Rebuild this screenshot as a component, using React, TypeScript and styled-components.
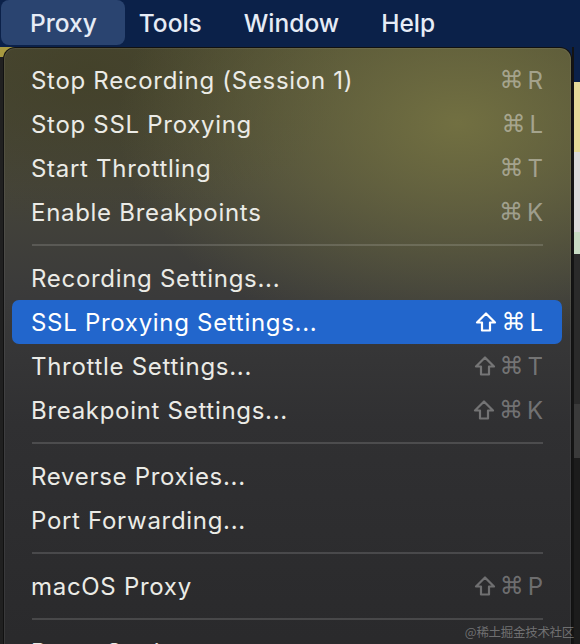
import React from "react";
import styled, { createGlobalStyle } from "styled-components";

const GlobalStyle = createGlobalStyle`
  html, body { margin: 0; padding: 0; background: #1c1c1e; overflow: hidden; }
  body { font-family: Inter, "Noto Sans", "DejaVu Sans", sans-serif; }
`;

const Screen = styled.div`
  position: relative;
  width: 580px;
  height: 644px;
  display: flex;
  flex-direction: column;
  overflow: hidden;
`;

const MenuBar = styled.div`
  height: 47px;
  flex: none;
  background: #0b2149;
  display: flex;
  align-items: flex-start;
  padding-left: 1px;
`;

const MenuTitle = styled.div<{ $active?: boolean; $pl?: number }>`
  height: 45px;
  display: flex;
  align-items: center;
  padding: 0 ${(p) => (p.$active ? "28px" : "14px")} 0 ${(p) => (p.$pl ?? (p.$active ? 29 : 14))}px;
  font-size: 24.5px;
  font-weight: 500;
  color: #e6ecf6;
  border-radius: 8px;
  background: ${(p) => (p.$active ? "#2a4470" : "transparent")};
`;

const Body = styled.div`
  flex: 1;
  display: flex;
  background:
    linear-gradient(90deg, #a89a40 0, #a89a40 18px, #0b2149 18px) top / 100% 14px no-repeat,
    #1e1e20;
`;

const LeftEdge = styled.div`
  width: 3px;
  flex: none;
  background: #202020;
  margin-top: 10px;
`;

const Panel = styled.div`
  width: 569px;
  flex: none;
  box-sizing: border-box;
  border-radius: 12px 12px 0 0;
  border: 1px solid #111;
  border-bottom: none;
  box-shadow: inset 0 0 0 1px rgba(255, 255, 255, 0.07);
  padding: 10px 9px 0 8px;
  display: flex;
  flex-direction: column;
  background:
    radial-gradient(ellipse 60% 36% at 80% 12%, rgba(116, 114, 66, 0.95), rgba(116, 114, 66, 0)),
    radial-gradient(ellipse 45% 25% at 15% 4%, rgba(66, 64, 40, 0.8), rgba(66, 64, 40, 0)),
    linear-gradient(180deg, #4a4933 0%, #45443a 22%, #3a3a3a 40%, #303032 60%, #29292b 100%);
`;

const RightEdge = styled.div`
  flex: 1;
  display: flex;
  flex-direction: column;
  border-left: 2px solid #141414;
`;

const Strip = styled.div<{ $c: string; $h?: number }>`
  background: ${(p) => p.$c};
  height: ${(p) => (p.$h ? `${p.$h}px` : "auto")};
  flex: ${(p) => (p.$h ? "none" : "1")};
`;

const Item = styled.div<{ $active?: boolean }>`
  height: 44px;
  flex: none;
  display: flex;
  align-items: center;
  justify-content: space-between;
  padding: 0 19px;
  border-radius: 7px;
  background: ${(p) => (p.$active ? "#2266cc" : "transparent")};
  color: ${(p) => (p.$active ? "#ffffff" : "#ebebe6")};
  font-size: 24px;
  letter-spacing: 0.7px;
`;

const Shortcut = styled.span<{ $active?: boolean; $dim?: boolean }>`
  display: flex;
  align-items: center;
  gap: 4px;
  color: ${(p) =>
    p.$active ? "#ffffff" : p.$dim ? "rgba(255,255,255,0.32)" : "rgba(255,255,255,0.42)"};
  font-size: 24px;
  letter-spacing: 0;
`;

const Cmd = styled.span`
  font-family: "DejaVu Sans", sans-serif;
  font-size: 24px;
  line-height: 1;
`;

const ShiftIcon = styled.svg`
  width: 22px;
  height: 22px;
  flex: none;
`;

const Separator = styled.div`
  height: 22px;
  flex: none;
  display: flex;
  align-items: center;
  padding: 0 19px 0 20px;
  &::after {
    content: "";
    flex: 1;
    height: 2px;
    background: rgba(255, 255, 255, 0.14);
  }
`;

const Watermark = styled.div`
  position: absolute;
  right: 6px;
  bottom: 3px;
  font-family: "Noto Sans CJK SC", "DejaVu Sans", sans-serif;
  font-size: 12.5px;
  color: rgba(200, 200, 200, 0.45);
  letter-spacing: -0.3px;
`;

type Entry =
  | { sep: true }
  | { label: string; keys?: string; shift?: boolean; active?: boolean };

const entries: Entry[] = [
  { label: "Stop Recording (Session 1)", keys: "R" },
  { label: "Stop SSL Proxying", keys: "L" },
  { label: "Start Throttling", keys: "T" },
  { label: "Enable Breakpoints", keys: "K" },
  { sep: true },
  { label: "Recording Settings..." },
  { label: "SSL Proxying Settings...", keys: "L", shift: true, active: true },
  { label: "Throttle Settings...", keys: "T", shift: true },
  { label: "Breakpoint Settings...", keys: "K", shift: true },
  { sep: true },
  { label: "Reverse Proxies..." },
  { label: "Port Forwarding..." },
  { sep: true },
  { label: "macOS Proxy", keys: "P", shift: true },
  { sep: true },
  { label: "Proxy Settings..." },
];

function Shift() {
  return (
    <ShiftIcon viewBox="0 0 22 22">
      <path
        d="M11 2.5 L20 11.5 H15 V19.5 H7 V11.5 H2 Z"
        fill="none"
        stroke="currentColor"
        strokeWidth="2.2"
        strokeLinejoin="round"
      />
    </ShiftIcon>
  );
}

export default function App() {
  return (
    <Screen>
      <GlobalStyle />
      <MenuBar>
        <MenuTitle $active>Proxy</MenuTitle>
        <MenuTitle>Tools</MenuTitle>
        <MenuTitle $pl={28}>Window</MenuTitle>
        <MenuTitle $pl={28}>Help</MenuTitle>
      </MenuBar>
      <Body>
        <LeftEdge />
        <Panel>
          {entries.map((e, i) =>
            "sep" in e ? (
              <Separator key={i} />
            ) : (
              <Item key={i} $active={e.active}>
                <span>{e.label}</span>
                {e.keys && (
                  <Shortcut $active={e.active} $dim={e.shift}>
                    {e.shift && <Shift />}
                    <Cmd>⌘</Cmd>
                    <span>{e.keys}</span>
                  </Shortcut>
                )}
              </Item>
            )
          )}
        </Panel>
        <RightEdge>
          <Strip $c="#0b2149" $h={35} />
          <Strip $c="#e6dc9a" $h={70} />
          <Strip $c="#dcdcdc" $h={80} />
          <Strip $c="#c8dcc4" $h={22} />
          <Strip $c="#2a2a2a" $h={150} />
          <Strip $c="#3a3a3a" $h={54} />
          <Strip $c="#1c1c1c" />
        </RightEdge>
      </Body>
      <Watermark>@稀土掘金技术社区</Watermark>
    </Screen>
  );
}
